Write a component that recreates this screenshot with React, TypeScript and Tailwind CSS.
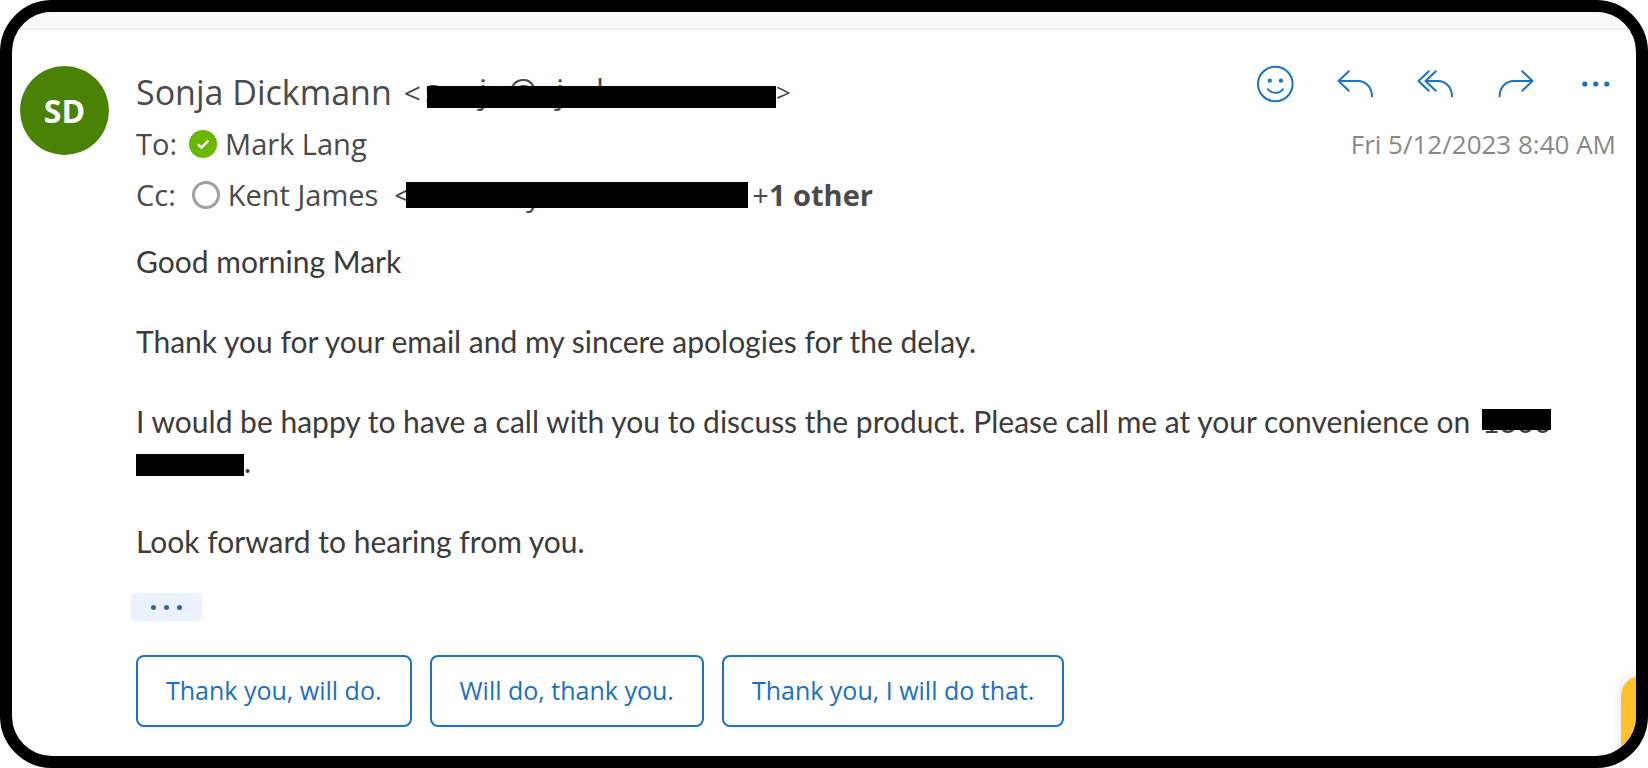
import type { ReactNode } from "react";

const replies = ["Thank you, will do.", "Will do, thank you.", "Thank you, I will do that."];

function ActionButton({ label, children }: { label: string; children: ReactNode }) {
  return (
    <button type="button" aria-label={label} className="flex size-10 items-center justify-center">
      <svg
        viewBox="0 0 40 40"
        className="size-10"
        fill="none"
        stroke="#1a73c7"
        strokeWidth="2"
        strokeLinecap="round"
        strokeLinejoin="round"
        aria-hidden="true"
      >
        {children}
      </svg>
    </button>
  );
}

function Actions() {
  return (
    <div className="flex gap-10">
      <ActionButton label="React">
        <circle cx="19.3" cy="20" r="17.3" />
        <circle cx="13.8" cy="16.7" r="2.1" fill="#1a73c7" stroke="none" />
        <circle cx="25" cy="16.7" r="2.1" fill="#1a73c7" stroke="none" />
        <path d="M12 25.3C16 30 22.8 30 26.8 25.3" />
      </ActionButton>
      <ActionButton label="Reply">
        <path d="M12.8 7.3L2.5 17L12.8 26.7M2.5 17H22C29.5 17 36 23 36 32.6" />
      </ActionButton>
      <ActionButton label="Reply all">
        <path d="M12.8 7.3L2.5 17L12.8 26.7M19.8 7.3L9.5 17L19.8 26.7M9.5 17H22C29.5 17 36 23 36 32.6" />
      </ActionButton>
      <ActionButton label="Forward">
        <path d="M26.2 7.3L36.5 17L26.2 26.7M36.5 17H17.5C10 17 3.6 23 3.6 32.6" />
      </ActionButton>
      <ActionButton label="More actions">
        <g fill="#1a6fc4" stroke="none">
          <circle cx="8.8" cy="20" r="2.6" />
          <circle cx="19.8" cy="20" r="2.6" />
          <circle cx="30.8" cy="20" r="2.6" />
        </g>
      </ActionButton>
    </div>
  );
}

export default function App() {
  return (
    <div className="min-h-screen bg-white font-['Open_Sans',sans-serif] text-[#4a4a4a]">
      <main className="relative flex min-h-screen flex-col overflow-hidden rounded-[52px] border-12 border-black bg-white">
        <div className="h-[18px] border-b-2 border-[#ececec] bg-[#fafafa]" />

        <article className="flex gap-[27px] pr-5 pl-2">
          <div className="mt-9 flex size-[89px] shrink-0 items-center justify-center rounded-full bg-[#498205] text-[32px] font-bold text-white">
            SD
          </div>

          <div className="min-w-0 flex-1 pt-8">
            <header className="flex items-start justify-between">
              <div>
                <h1 className="flex h-[61px] items-center text-[34px]">
                  <span>Sonja Dickmann</span>
                  <span className="ml-3 text-[30px]">&lt;</span>
                  <span className="relative ml-1 flex h-[46px] w-[351px] items-center pb-1 text-[32px]">
                    <span className="w-[54px]">s</span>
                    <span className="w-[29px]">j</span>
                    <span className="w-12">@</span>
                    <span className="w-10">j</span>
                    <span>l</span>
                    <span className="absolute top-4 right-0 left-[2px] h-[22px] bg-black" />
                  </span>
                  <span className="text-[26px]">&gt;</span>
                </h1>
                <div className="flex h-[42px] items-center text-[29px]">
                  <span>To:</span>
                  <svg viewBox="0 0 28 28" className="mr-2 ml-3 size-7" aria-label="Available">
                    <circle cx="14" cy="14" r="14" fill="#6bb700" />
                    <path d="M9 14.5L12.5 17.5L19.5 10.5" fill="none" stroke="#fff" strokeWidth="2.4" />
                  </svg>
                  <span>Mark Lang</span>
                </div>
                <div className="mt-[9px] flex h-[42px] items-center text-[29px]">
                  <span>Cc:</span>
                  <span className="mr-2 ml-4 size-7 rounded-full border-3 border-[#a19f9d]" />
                  <span>Kent James</span>
                  <span className="relative ml-4 flex h-[42px] w-[354px] items-center">
                    <span className="w-[132px]">&lt;</span>
                    <span>y</span>
                    <span className="absolute top-2 right-0 left-3 h-[26px] bg-black" />
                  </span>
                  <span className="ml-1">
                    +<b>1 other</b>
                  </span>
                </div>
              </div>

              <div className="flex flex-col items-end gap-[21px] pt-[2px]">
                <Actions />
                <time className="text-[26px] text-[#8a8886]">Fri 5/12/2023 8:40 AM</time>
              </div>
            </header>

            <div className="mt-[25px] flex flex-col gap-10 font-['Lato',sans-serif] text-[30px] leading-10 text-[#3b3b3b]">
              <p>Good morning Mark</p>
              <p>Thank you for your email and my sincere apologies for the delay.</p>
              <p>
                I would be happy to have a call with you to discuss the product. Please call me at your convenience on{" "}
                <span className="relative ml-1 inline-block w-[69px]">
                  1300
                  <span className="absolute inset-x-0 top-2 h-[21px] bg-black" />
                </span>{" "}
                <span className="inline-block h-[22px] w-[108px] bg-black align-middle" />.
              </p>
              <p>Look forward to hearing from you.</p>
            </div>

            <button
              type="button"
              aria-label="Show trimmed content"
              className="mt-8 -ml-[5px] flex h-7 w-[71px] items-center justify-center gap-2 rounded-sm bg-[#eaf3fd]"
            >
              <span className="size-[5px] rounded-full bg-[#2a6aa5]" />
              <span className="size-[5px] rounded-full bg-[#2a6aa5]" />
              <span className="size-[5px] rounded-full bg-[#2a6aa5]" />
            </button>

            <div className="mt-[34px] flex flex-wrap gap-[18px]">
              {replies.map((reply) => (
                <button
                  key={reply}
                  type="button"
                  className="h-[72px] rounded-lg border-2 border-[#1a73c7] px-7 text-[25px] text-[#1a6fc4]"
                >
                  {reply}
                </button>
              ))}
            </div>
          </div>
        </article>

        <div className="absolute -right-6 bottom-0 h-20 w-[39px] rounded-tl-[20px] bg-[#ffc02a] shadow-[0_0_12px_rgba(0,0,0,0.12)]" />
      </main>
    </div>
  );
}
